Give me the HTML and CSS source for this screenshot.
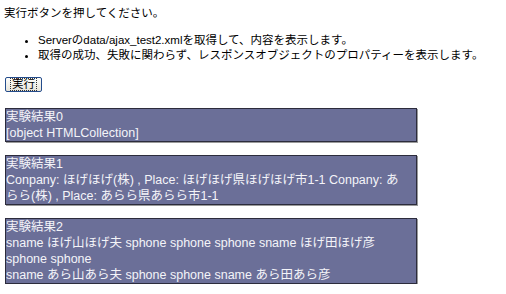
FILE: index.html
```html
<!DOCTYPE html>
<html lang="ja">
<head>
<meta charset="utf-8">
<title>ajax test2</title>
<link rel="stylesheet" href="styles.css">
</head>
<body>
<p class="lead">実行ボタンを押してください。</p>
<ul class="notes">
  <li>Serverのdata/ajax_test2.xmlを取得して、内容を表示します。</li>
  <li>取得の成功、失敗に関わらず、レスポンスオブジェクトのプロパティーを表示します。</li>
</ul>
<button class="run" type="button"><span class="run-label">実行</span></button>
<div class="result">実験結果0<br>[object HTMLCollection]</div>
<div class="result">実験結果1<br>Conpany: ほげほげ(株) , Place: ほげほげ県ほげほげ市1-1 Conpany: あ<br>らら(株) , Place: あらら県あらら市1-1</div>
<div class="result">実験結果2<br>sname ほげ山ほげ夫 sphone sphone sphone sname ほげ田ほげ彦<br>sphone sphone<br>sname あら山あら夫 sphone sphone sname あら田あら彦</div>
</body>
</html>
```
FILE: styles.css
```css
html, body {
  background: #ffffff;
}
body {
  margin: 0;
  padding: 5px 5px 0 4px;
  font-family: "Liberation Sans", "Noto Sans CJK JP", sans-serif;
  font-size: 11.5px;
  line-height: 16px;
  color: #000000;
}
.lead {
  margin: 0;
}
.notes {
  margin: 12px 0 0 0;
  padding-left: 34px;
  line-height: 15px;
}
.run {
  display: block;
  margin: 14px 0 0 1px;
  padding: 1px 5px;
  height: 15px;
  font: inherit;
  font-size: 11.5px;
  line-height: 11px;
  background: linear-gradient(#fdfdfb, #e6e4da);
  border: 1px solid #244c8c;
  border-radius: 2px;
  color: #000000;
}
.run-label {
  display: block;
  padding: 0 1px;
  outline: 1px dotted #333333;
}
.result {
  width: 410px;
  margin: 16px 0 0 1px;
  background: #6b6f98;
  color: #f4f4f8;
  border: 1px solid #2c2c3c;
  box-shadow: 1px 1px 0 #9a9a9a;
  font-size: 12.5px;
  line-height: 16px;
  white-space: nowrap;
  overflow: hidden;
}
.result + .result {
  margin-top: 13px;
}
```
